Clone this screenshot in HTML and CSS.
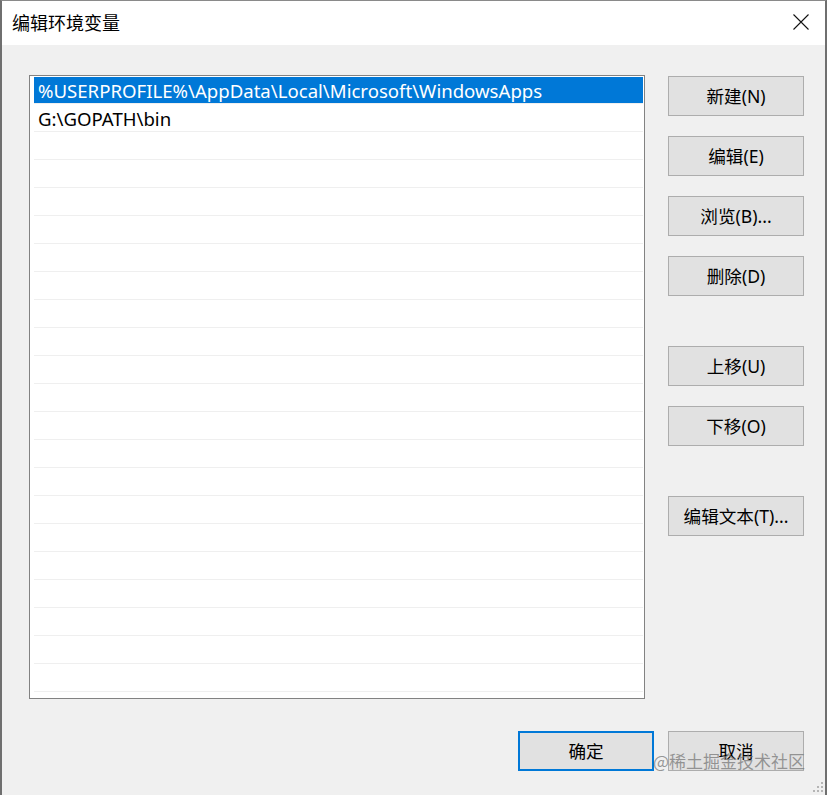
FILE: index.html
```html
<!DOCTYPE html>
<html lang="zh-CN">
<head>
  <meta charset="UTF-8">
  <title>编辑环境变量</title>
  <link rel="stylesheet" href="styles.css">
</head>
<body>
  <div class="ventana">
    <div class="titulo">
      <span class="titulo-texto">编辑环境变量</span>
      <svg class="cerrar" width="16" height="16" viewBox="0 0 16 16">
        <path d="M0.5 0.5 L15.5 15.5 M15.5 0.5 L0.5 15.5" stroke="#111" stroke-width="1.1" fill="none"/>
      </svg>
    </div>

    <div class="cuerpo">
      <div class="lista">
        <div class="fila sel"><span>%USERPROFILE%\AppData\Local\Microsoft\WindowsApps</span></div>
        <div class="fila"><span>G:\GOPATH\bin</span></div>
        <div class="fila"></div><div class="fila"></div><div class="fila"></div>
        <div class="fila"></div><div class="fila"></div><div class="fila"></div>
        <div class="fila"></div><div class="fila"></div><div class="fila"></div>
        <div class="fila"></div><div class="fila"></div><div class="fila"></div>
        <div class="fila"></div><div class="fila"></div><div class="fila"></div>
        <div class="fila"></div><div class="fila"></div><div class="fila"></div>
        <div class="fila"></div><div class="fila"></div><div class="fila"></div>
      </div>

      <div class="acciones">
        <div class="grupo">
          <button class="boton">新建(N)</button>
          <button class="boton">编辑(E)</button>
          <button class="boton">浏览(B)...</button>
          <button class="boton">删除(D)</button>
        </div>
        <div class="grupo">
          <button class="boton">上移(U)</button>
          <button class="boton">下移(O)</button>
        </div>
        <div class="grupo">
          <button class="boton">编辑文本(T)...</button>
        </div>
      </div>
    </div>

    <div class="pie">
      <button class="boton defecto">确定</button>
      <button class="boton">取消</button>
    </div>

    <div class="marca-agua">@稀土掘金技术社区</div>

    <svg class="agarre" width="11" height="11" viewBox="0 0 11 11">
      <rect x="8" y="0" width="2" height="2" fill="#b5b5b5"/>
      <rect x="4" y="4" width="2" height="2" fill="#b5b5b5"/>
      <rect x="8" y="4" width="2" height="2" fill="#b5b5b5"/>
      <rect x="0" y="8" width="2" height="2" fill="#b5b5b5"/>
      <rect x="4" y="8" width="2" height="2" fill="#b5b5b5"/>
      <rect x="8" y="8" width="2" height="2" fill="#b5b5b5"/>
    </svg>
  </div>
</body>
</html>
```

FILE: styles.css
```css
body {
  margin: 0;
  font-family: 'Noto Sans', 'Noto Sans CJK SC', sans-serif;
  color: #000;
  background: #f0f0f0;
}
.ventana {
  position: relative;
  width: 827px;
  height: 795px;
  box-sizing: border-box;
  border-left: 2px solid #6f6f6f;
  border-right: 2px solid #6f6f6f;
  border-top: 1px solid #8a8a8a;
  background: #f0f0f0;
  display: flex;
  flex-direction: column;
  overflow: hidden;
}
.titulo {
  height: 44px;
  background: #fff;
  display: flex;
  align-items: center;
  justify-content: space-between;
  padding: 0 16px 0 10px;
}
.titulo-texto {
  font-family: 'Noto Sans CJK SC', sans-serif;
  font-size: 18px;
  margin-top: -2px;
}
.cerrar {
  margin-top: -2px;
}
.cuerpo {
  display: flex;
  padding: 30px 0 0 27px;
}
.lista {
  width: 616px;
  height: 624px;
  box-sizing: border-box;
  border: 1px solid #828282;
  background: #fff;
  padding: 0 1px 0 4px;
  overflow: hidden;
}
.fila {
  height: 27px;
  border-bottom: 1px solid #efefef;
  display: flex;
  align-items: center;
  font-size: 18.6px;
  padding-left: 4px;
  white-space: nowrap;
}
.fila.sel {
  background: #0078d7;
  color: #fff;
  margin-top: 1px;
  height: 26px;
}
.fila span {
  margin-top: 1px;
}
.fila.sel span {
  margin-top: 0;
}
.acciones {
  margin-left: 23px;
  padding-top: 1px;
  display: flex;
  flex-direction: column;
  gap: 50px;
}
.grupo {
  display: flex;
  flex-direction: column;
  gap: 20px;
}
.boton {
  width: 136px;
  height: 40px;
  box-sizing: border-box;
  background: #e1e1e1;
  border: 1px solid #adadad;
  font-family: 'Noto Sans', 'Noto Sans CJK SC', sans-serif;
  font-size: 17.6px;
  color: #000;
  padding: 0 0 2px;
  margin: 0;
}
.boton.defecto {
  border: 2px solid #0078d7;
}
.pie {
  display: flex;
  justify-content: flex-end;
  gap: 14px;
  padding-right: 21px;
  margin-top: 32px;
}
.marca-agua {
  position: absolute;
  right: 20px;
  bottom: 22px;
  font-family: 'Noto Sans CJK SC', sans-serif;
  font-size: 17px;
  color: rgba(120,120,120,0.75);
}
.agarre {
  position: absolute;
  right: 1px;
  bottom: 2px;
}
```
